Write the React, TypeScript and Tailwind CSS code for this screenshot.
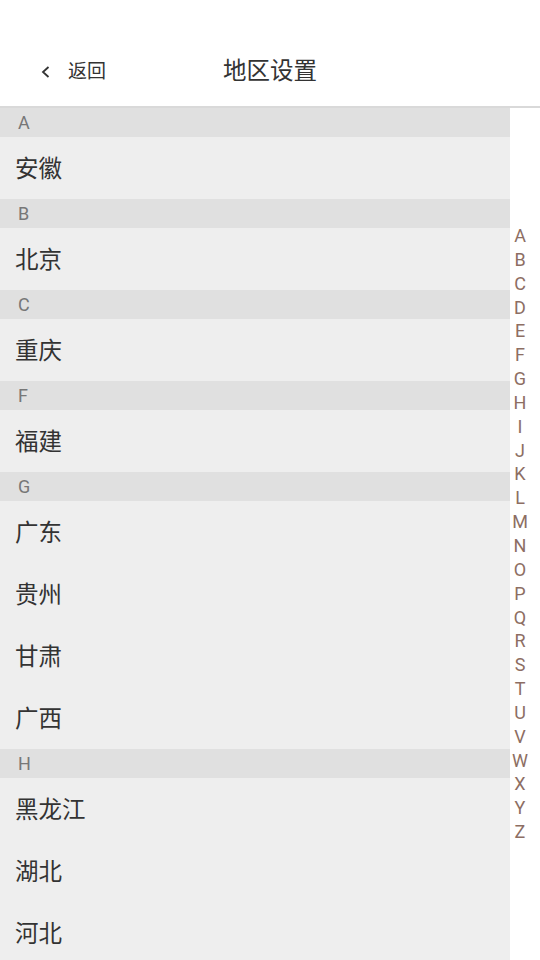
import React from "react";

const sections: { letter: string; items: string[] }[] = [
  { letter: "A", items: ["安徽"] },
  { letter: "B", items: ["北京"] },
  { letter: "C", items: ["重庆"] },
  { letter: "F", items: ["福建"] },
  { letter: "G", items: ["广东", "贵州", "甘肃", "广西"] },
  { letter: "H", items: ["黑龙江", "湖北", "河北"] },
];

const letters = "ABCDEFGHIJKLMNOPQRSTUVWXYZ".split("");

export default function App() {
  return (
    <div
      className="w-[540px] h-[960px] overflow-hidden bg-white flex flex-col"
      style={{ fontFamily: '"Roboto", "Noto Sans CJK SC", sans-serif' }}
    >
      <div className="h-[106px] shrink-0 bg-white flex items-end pb-[19px] relative">
        <div className="flex items-center pl-[39px] text-[#333] h-[30px]">
          <svg width="14" height="14" viewBox="0 0 14 14" className="mr-[15px]">
            <path d="M9.5 2 L4 7 L9.5 12" fill="none" stroke="#333" strokeWidth="1.8" />
          </svg>
          <span className="text-[19px]">返回</span>
        </div>
        <div className="absolute left-0 right-0 bottom-[19px] h-[30px] flex items-center justify-center text-[23.5px] text-[#333]">
          地区设置
        </div>
      </div>
      <div className="h-[2px] shrink-0 bg-[#d9d9d9]" />
      <div className="flex flex-1 min-h-0">
        <div className="w-[510px] bg-[#eeeeee] flex flex-col">
          {sections.map((s) => (
            <div key={s.letter} className="flex flex-col">
              <div className="h-[29px] shrink-0 bg-[#e0e0e0] pl-[18px] flex items-center text-[18px] text-[#777]">
                {s.letter}
              </div>
              {s.items.map((it) => (
                <div key={it} className="h-[62px] shrink-0 pl-[15px] pt-[3px] flex items-center text-[23.5px] text-[#333]">
                  {it}
                </div>
              ))}
            </div>
          ))}
        </div>
        <div className="w-[30px] pr-[10px] flex flex-col items-center justify-center">
          {letters.map((l) => (
            <div key={l} className="h-[23.85px] leading-[23.85px] text-[18px] text-[#8d6e63]">
              {l}
            </div>
          ))}
        </div>
      </div>
    </div>
  );
}
